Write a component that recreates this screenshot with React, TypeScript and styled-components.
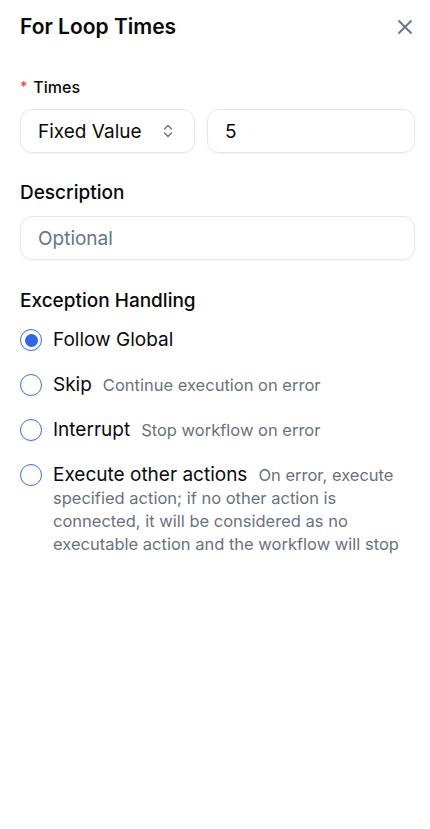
import React from 'react'
import styled, { createGlobalStyle } from 'styled-components'

const GlobalStyle = createGlobalStyle`
  html, body {
    margin: 0;
    padding: 0;
    background: #ffffff;
  }
  body {
    font-family: Inter, "Noto Sans", sans-serif;
    color: #0a0a0a;
    -webkit-font-smoothing: antialiased;
  }
`

const Panel = styled.div`
  width: 430px;
  min-height: 829px;
  box-sizing: border-box;
  padding: 13px 15px 20px 20px;
  display: flex;
  flex-direction: column;
`

const Header = styled.div`
  display: flex;
  align-items: center;
  justify-content: space-between;
  height: 28px;
`

const Title = styled.h1`
  margin: 0;
  font-size: 21px;
  font-weight: 600;
  line-height: 28px;
  color: #0a0a0a;
`

const CloseButton = styled.button`
  border: none;
  background: none;
  padding: 0;
  width: 20px;
  height: 20px;
  display: flex;
  align-items: center;
  justify-content: center;
  color: #64748b;
  cursor: pointer;
`

const Section = styled.div<{ $top: number }>`
  margin-top: ${p => p.$top}px;
  display: flex;
  flex-direction: column;
`

const SmallLabel = styled.div`
  font-size: 16px;
  font-weight: 500;
  line-height: 20px;
  display: flex;
  align-items: center;
  gap: 6px;
`

const Required = styled.span`
  color: #ef4444;
  font-size: 14px;
`

const Label = styled.div`
  font-size: 19px;
  font-weight: 500;
  line-height: 24px;
`

const FieldRow = styled.div<{ $top?: number }>`
  display: flex;
  gap: 12px;
  margin-top: ${p => p.$top ?? 12}px;
`

const Box = styled.div<{ $width?: number }>`
  box-sizing: border-box;
  height: 44px;
  border: 1px solid #e2e8f0;
  border-radius: 12px;
  box-shadow: 0 1px 2px rgba(15, 23, 42, 0.05);
  padding: 0 20px 0 17px;
  display: flex;
  align-items: center;
  justify-content: space-between;
  font-size: 19px;
  color: #0a0a0a;
  ${p => (p.$width ? `width: ${p.$width}px; flex: none;` : 'flex: 1;')}
`

const Placeholder = styled.span`
  color: #64748b;
`

const Options = styled.div`
  display: flex;
  flex-direction: column;
  gap: 21px;
  margin-top: 15px;
`

const Option = styled.div`
  display: flex;
  align-items: flex-start;
  gap: 11px;
`

const Radio = styled.span<{ $checked?: boolean }>`
  box-sizing: border-box;
  flex: none;
  width: 22px;
  height: 22px;
  margin-top: 1px;
  border-radius: 50%;
  border: 1.5px solid #3b6fe6;
  display: flex;
  align-items: center;
  justify-content: center;
  box-shadow: 0 1px 2px rgba(15, 23, 42, 0.08);
  &::after {
    content: '';
    display: ${p => (p.$checked ? 'block' : 'none')};
    width: 13px;
    height: 13px;
    border-radius: 50%;
    background: #2f66e8;
  }
`

const OptionText = styled.div`
  line-height: 23px;
  font-size: 16.5px;
  color: #6b7280;
`

const OptionName = styled.span`
  font-size: 19px;
  color: #0a0a0a;
  margin-right: 11px;
`

const options = [
  { name: 'Follow Global', desc: '', checked: true },
  { name: 'Skip', desc: 'Continue execution on error' },
  { name: 'Interrupt', desc: 'Stop workflow on error' },
  {
    name: 'Execute other actions',
    desc: 'On error, execute specified action; if no other action is connected, it will be considered as no executable action and the workflow will stop',
  },
]

const App: React.FC = () => {
  return (
    <>
      <GlobalStyle />
      <Panel>
        <Header>
          <Title>For Loop Times</Title>
          <CloseButton aria-label="Close">
            <svg width="16" height="16" viewBox="0 0 16 16" fill="none" stroke="currentColor" strokeWidth="1.8" strokeLinecap="round">
              <path d="M2 2l12 12M14 2L2 14" />
            </svg>
          </CloseButton>
        </Header>

        <Section $top={36}>
          <SmallLabel>
            <Required>*</Required>
            Times
          </SmallLabel>
          <FieldRow>
            <Box $width={175}>
              <span>Fixed Value</span>
              <svg width="12" height="16" viewBox="0 0 12 16" fill="none" stroke="#6b7280" strokeWidth="1.4" strokeLinecap="round" strokeLinejoin="round">
                <path d="M2.5 6L6 2.5 9.5 6M2.5 10L6 13.5 9.5 10" />
              </svg>
            </Box>
            <Box>5</Box>
          </FieldRow>
        </Section>

        <Section $top={28}>
          <Label>Description</Label>
          <FieldRow $top={11}>
            <Box>
              <Placeholder>Optional</Placeholder>
            </Box>
          </FieldRow>
        </Section>

        <Section $top={29}>
          <Label>Exception Handling</Label>
          <Options>
            {options.map(o => (
              <Option key={o.name}>
                <Radio $checked={o.checked} />
                <OptionText>
                  <OptionName>{o.name}</OptionName>
                  {o.desc}
                </OptionText>
              </Option>
            ))}
          </Options>
        </Section>
      </Panel>
    </>
  )
}

export default App
